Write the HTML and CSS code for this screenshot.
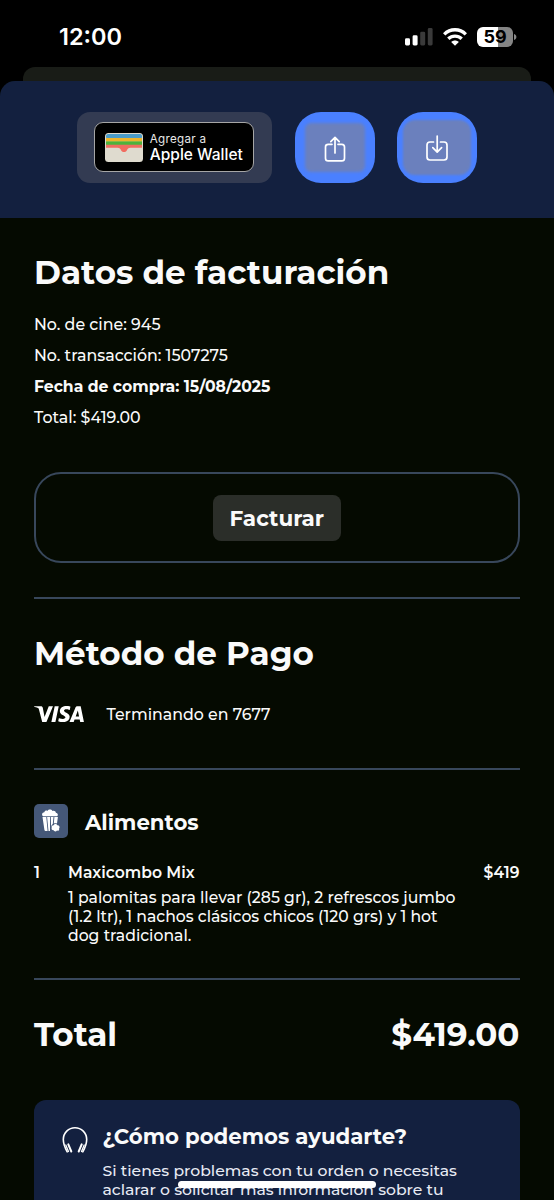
FILE: index.html
```html
<!DOCTYPE html>
<html lang="es">
<head>
<meta charset="utf-8">
<title>Detalle de compra</title>
<link rel="stylesheet" href="styles.css">
</head>
<body>
<div class="screen">
  <header class="status">
    <span class="clock">12:00</span>
    <div class="indicators">
      <svg class="signal" width="28" height="18" viewBox="0 0 28 18">
        <rect x="0" y="10.3" width="5" height="7.2" rx="1.4" fill="#fff"/>
        <rect x="7.6" y="7.3" width="5" height="10.2" rx="1.4" fill="#fff"/>
        <rect x="15.2" y="3.7" width="5" height="13.8" rx="1.4" fill="#3a3a3a"/>
        <rect x="22.8" y="0" width="4.8" height="17.5" rx="1.4" fill="#3a3a3a"/>
      </svg>
      <svg class="wifi" width="24" height="18" viewBox="0 0 24 18">
        <g fill="none" stroke="#fff" stroke-width="3.3">
          <path d="M1.200 6.300C7.200 .2 16.800 .2 22.800 6.300"/>
          <path d="M5.300 10.800c3.800-3.700 9.600-3.700 13.400 0"/>
        </g>
        <path d="M12 17.700 8.200 14c2.200-2 5.400-2 7.600 0z" fill="#fff"/>
      </svg>
      <div class="battery"><span>59</span></div>
      <svg class="nub" width="3" height="6" viewBox="0 0 3 6"><path d="M0 0c3.200 1 3.200 5 0 6z" fill="#8a8a8a"/></svg>
    </div>
  </header>
  <div class="back-sheet"></div>
  <main class="sheet">
    <div class="actions">
      <div class="wallet-wrap">
        <div class="wallet">
          <svg width="38" height="29" viewBox="0 0 38 29">
            <clipPath id="card"><rect width="38" height="29" rx="3.500"/></clipPath>
            <g clip-path="url(#card)">
              <rect width="38" height="29" fill="#dfdbcf"/>
              <rect x="1" y="1" width="36" height="5" rx="2" fill="#4b9cc9"/>
              <rect x="1" y="5" width="36" height="3.700" fill="#efb42c"/>
              <rect x="1" y="8.400" width="36" height="3.600" fill="#4cb33c"/>
              <path d="M1 11.800h36v3H25.500c-2.500 0-2.700 1.200-3.700 2.600-1.400 2-4.200 2-5.600 0-1-1.400-1.200-2.600-3.700-2.600H1z" fill="#f16c60"/>
            </g>
          </svg>
          <div class="wallet-text"><span class="w1">Agregar a</span><span class="w2">Apple Wallet</span></div>
        </div>
      </div>
      <div class="action share">
        <svg width="24" height="30" viewBox="0 0 24 30"><path d="M9 11.300H5.200Q2.500 11.300 2.500 14v11.200q0 2.700 2.700 2.700h13.600q2.700 0 2.700-2.700V14q0-2.700-2.700-2.700H15M12 20V4.500M7.800 8.600 12 4.400l4.200 4.200"/></svg>
      </div>
      <div class="action download">
        <svg width="24" height="30" viewBox="0 0 24 30"><path d="M8.500 9H5Q2 9 2 12v12q0 3 3 3h14q3 0 3-3V12q0-3-3-3h-3.500M12.200 3v15.800M7.800 14.700l4.400 4.400 4.400-4.400"/></svg>
      </div>
    </div>
    <div class="content">
      <section class="billing">
        <h1>Datos de facturación</h1>
        <p>No. de cine: 945</p>
        <p>No. transacción: 1507275</p>
        <p class="date">Fecha de compra: 15/08/2025</p>
        <p>Total: $419.00</p>
        <div class="invoice"><span class="invoice-btn">Facturar</span></div>
      </section>
      <section class="payment">
        <h1>Método de Pago</h1>
        <div class="card-row">
          <svg class="visa" viewBox="0 0 1000 324" width="50" height="16.200"><path fill="#fff" d="M651.200.5c-70.900 0-134.300 36.800-134.300 104.700 0 77.900 112.400 83.300 112.400 122.400 0 16.500-18.900 31.200-51.100 31.200-45.700 0-79.900-20.600-79.900-20.600l-14.600 68.500s39.400 17.400 91.700 17.400c77.500 0 138.500-38.600 138.500-107.600 0-82.300-112.900-87.500-112.900-123.800 0-12.900 15.500-27 47.600-27 36.300 0 65.900 15 65.900 15l14.300-66.200S696.600.5 651.200.5zM2.200 5.500.5 15.500s29.800 5.500 56.700 16.400c34.600 12.500 37.100 19.800 42.900 42.400l63.500 244.800h85.100L379.800 5.500h-84.900L210.700 218.500 176.300 38C173.200 17.300 157.200 5.500 137.700 5.500H2.200zm411.700 0-66.600 313.600h81L494.600 5.500h-80.700zm451.700 0c-19.500 0-29.900 10.500-37.500 28.700L709.500 319.100h84.900l16.400-47.400h103.500l10 47.400h74.900L933.900 5.500h-68.300zm11 84.700 25.200 117.700h-67.400l42.200-117.700z"/></svg>
          <span class="ending">Terminando en 7677</span>
        </div>
      </section>
      <section class="food">
        <div class="food-head">
          <div class="food-icon">
            <svg width="20" height="24" viewBox="0 0 20 24" fill="#fff">
              <path d="M2 7.300C.4 5.800 1 3.400 3.300 3.300 3.700 1.700 5.400 1.200 6.500 2 7.400.2 10.400.1 11.400 2c1.600-.7 3.400.2 3.500 1.700 2 .2 2.600 2.400 1.300 3.600z"/>
              <path d="M1.500 8h3.800l1.300 14H4.900c-.9 0-1.400-.5-1.500-1.300zM6.100 8h2.900v14H7.500zM9.800 8h2.700l-.7 7c-1.300 1-1.900 2.300-1.700 4zM13.400 8h3.500l-.9 6.400c-1-.3-2.200-.3-3.200 0z"/>
              <path d="M10.700 19c-.5-1.800.8-2.900 2-2.700.6-1.700 3-1.700 3.600-.1 2-.2 3 1.900 1.800 3.200.5 1.600-.8 2.700-2.100 2.200-1.100 1.400-3 1-3.300-.3-1.700.1-2.600-1.200-2-2.300z"/>
            </svg>
          </div>
          <h2>Alimentos</h2>
        </div>
        <div class="item">
          <span class="qty">1</span>
          <div class="item-body">
            <div class="item-name">Maxicombo Mix</div>
            <div class="desc">1 palomitas para llevar (285 gr), 2 refrescos jumbo<br>(1.2 ltr), 1 nachos clásicos chicos (120 grs) y 1 hot<br>dog tradicional.</div>
          </div>
          <span class="price">$419</span>
        </div>
      </section>
      <div class="total"><h1>Total</h1><h1>$419.00</h1></div>
      <section class="help">
        <svg width="26" height="28" viewBox="0 0 26 28" fill="none" stroke="#fff" stroke-linecap="round">
          <path stroke-width="1.600" d="M5.200 25.800C3 22 1.300 18.500 1.300 13.600a11.700 11.900 0 0 1 23.400 0c0 4.900-1.700 8.400-3.900 12.200"/>
          <path stroke-width="2" d="M6.300 18.300l3 7.200M19.700 18.300l-3 7.200"/>
          <path stroke-width="1.300" d="M3.800 19l2.700 6.500M22.200 19l-2.700 6.500"/>
        </svg>
        <div>
          <h2>¿Cómo podemos ayudarte?</h2>
          <div class="help-text">Si tienes problemas con tu orden o necesitas<br>aclarar o solicitar más información sobre tu</div>
        </div>
      </section>
    </div>
  </main>
  <div class="home-bar"></div>
</div>
</body>
</html>
```

FILE: styles.css
```css
* { box-sizing: border-box; margin: 0; padding: 0; }
body { background: #000; color: #fafafa; font-family: Montserrat, Inter, sans-serif; }
svg { display: block; flex: none; }
.screen { position: relative; width: 554px; height: 1200px; overflow: hidden; display: flex; flex-direction: column; }
.status { height: 67px; flex: none; display: flex; justify-content: space-between; align-items: flex-start; padding: 0 37px 0 59px; font-family: Inter, sans-serif; }
.clock { font-size: 23.500px; font-weight: 600; line-height: 28px; margin-top: 23px; color: #fff; }
.indicators { display: flex; align-items: center; height: 20px; margin-top: 27px; }
.wifi { margin-left: 10.500px; }
.battery { width: 36px; height: 20px; margin-left: 10px; border-radius: 6px; background: linear-gradient(90deg, #fff 59%, #858585 59%); color: #000; font-size: 18px; font-weight: 700; line-height: 20px; text-align: center; }
.nub { margin-left: 1px; }
.back-sheet { height: 28px; flex: none; margin: 0 23px -14px; border-radius: 12px 12px 0 0; background: #191c17; }
.sheet { position: relative; flex: 1; min-height: 0; overflow: hidden; border-radius: 15px 15px 0 0; background: #050a01; }
.actions { height: 136.500px; background: #13203f; display: flex; justify-content: center; align-items: flex-start; gap: 22.500px; padding-top: 31.400px; }
.wallet-wrap { width: 195.500px; height: 71px; border-radius: 13px; background: #333b52; padding: 10px 17px; }
.wallet { width: 160px; height: 49.500px; border: 1px solid #a6a6a6; border-radius: 9px; background: #000; display: flex; align-items: center; padding-left: 10px; gap: 7px; }
.wallet-text { display: flex; flex-direction: column; font-family: Inter, sans-serif; white-space: nowrap; padding-top: 1px; }
.w1 { font-size: 11.600px; line-height: 15px; letter-spacing: .3px; color: #e8e8e8; }
.w2 { font-size: 15.500px; line-height: 16px; font-weight: 500; color: #fff; }
.action { width: 80px; height: 71px; border-radius: 26px; background: #4a80ff; position: relative; display: grid; place-items: center; }
.action::before { content: ""; position: absolute; inset: 11px 10px; border-radius: 6px; background: #6b80bd; filter: blur(1.500px); }
.action.download::before { inset: 8px 6px; border-radius: 12px; filter: blur(1px); }
.action svg { position: relative; fill: none; stroke: #fff; stroke-width: 1.700; stroke-linecap: round; stroke-linejoin: round; }
.content { padding: 0 34.500px 0 34px; white-space: nowrap; }
h1 { font-size: 32.600px; line-height: 40px; font-weight: 700; }
h2 { font-size: 21.250px; line-height: 28px; font-weight: 700; }
.billing { height: 381px; padding-top: 34.500px; border-bottom: 2px solid #38475b; }
.billing p { font-size: 15.850px; line-height: 30.900px; font-weight: 500; }
.billing h1 { margin-bottom: 18px; }
.billing .date { font-size: 15.650px; font-weight: 700; }
.invoice { height: 91px; margin-top: 38.600px; border: 2px solid #38475b; border-radius: 27px; display: grid; place-items: center; }
.invoice-btn { width: 128px; height: 46px; border-radius: 8px; background: #2b2e29; font-size: 21.500px; line-height: 46px; font-weight: 700; text-align: center; }
.payment { height: 171px; padding-top: 34px; border-bottom: 2px solid #38475b; }
.card-row { display: flex; align-items: center; gap: 22.500px; height: 24px; margin-top: 29.600px; }
.ending { font-size: 15.800px; font-weight: 500; }
.food { height: 210.500px; padding-top: 34.500px; border-bottom: 2px solid #38475b; }
.food-head { display: flex; align-items: center; gap: 17px; height: 34px; }
.food-head h2 { padding-top: 1px; }
.food-icon { width: 34px; height: 34px; border-radius: 5px; background: #455878; display: grid; place-items: center; }
.item { display: flex; margin-top: 24.500px; font-size: 15.600px; line-height: 20px; }
.qty { width: 34px; font-weight: 600; }
.item-body { flex: 1; }
.item-name, .price { font-weight: 600; }
.desc { margin-top: 5.300px; line-height: 19.300px; font-size: 15.660px; font-weight: 500; }
.total { display: flex; justify-content: space-between; padding-top: 34px; height: 120px; }
.help { height: 140px; background: #13203f; border-radius: 12px; display: flex; align-items: flex-start; gap: 15px; padding: 22px 27.500px; }
.help svg { margin-top: 4px; }
.help-text { font-size: 15.640px; font-weight: 500; line-height: 19.300px; margin-top: 11px; color: #e8ebf4; }
.home-bar { position: absolute; left: 178px; top: 1181px; width: 198px; height: 7px; border-radius: 4px; background: #fff; }
```
